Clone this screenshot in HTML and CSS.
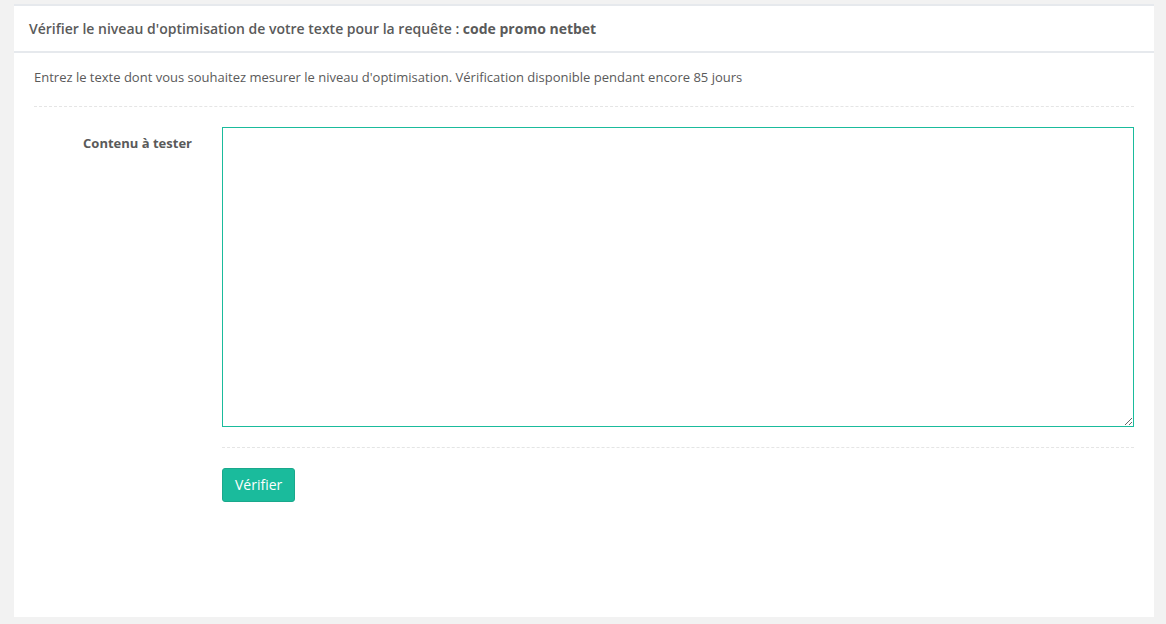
FILE: index.html
```html
<!DOCTYPE html>
<html lang="fr">
<head>
    <meta charset="UTF-8">
    <meta name="viewport" content="width=device-width, initial-scale=1.0">
    <title>Vérification</title>
    <link rel="stylesheet" href="styles.css">
</head>
<body>
    <div class="panel">
        <div class="panel-title">
            <h2>Vérifier le niveau d'optimisation de votre texte pour la requête : <b>code promo netbet</b></h2>
        </div>
        <div class="panel-content">
            <p class="intro">Entrez le texte dont vous souhaitez mesurer le niveau d'optimisation. Vérification disponible pendant encore 85 jours</p>
            <div class="separator"></div>
            <form class="check-form">
                <div class="form-row">
                    <label class="form-label" for="contenu">Contenu à tester</label>
                    <div class="form-field">
                        <textarea id="contenu" class="text-input" autofocus></textarea>
                    </div>
                </div>
                <div class="form-row">
                    <div class="form-label"></div>
                    <div class="form-field">
                        <div class="separator"></div>
                        <button type="button" class="btn-verify">Vérifier</button>
                    </div>
                </div>
            </form>
        </div>
    </div>
</body>
</html>
```

FILE: styles.css
```css
body {
    margin: 0;
    padding: 4px 12px 7px 14px;
    background-color: #f2f2f2;
    font-family: "Open Sans", Arial, sans-serif;
    font-size: 13px;
    color: #5a5a5a;
}
.panel {
    background: #fff;
    border-top: 2px solid #e6e9ed;
    height: 613px;
    box-sizing: border-box;
}
.panel-title {
    border-bottom: 2px solid #e6e9ed;
    padding: 13px 15px 0;
    height: 47px;
    box-sizing: border-box;
}
.panel-title h2 {
    margin: 0;
    font-size: 14px;
    font-weight: 600;
    line-height: 20px;
    color: #5a5a5a;
}
.panel-title b {
    font-weight: 700;
}
.panel-content {
    padding: 0 20px;
}
.intro {
    margin: 15px 0 20px;
    line-height: 18px;
}
.separator {
    border-top: 1px dashed #e5e5e5;
}
.check-form {
    margin-top: 20px;
}
.form-row {
    display: flex;
}
.form-label {
    width: 158px;
    flex: none;
    text-align: right;
    font-weight: 700;
    padding-top: 7px;
    line-height: 18px;
}
.form-field {
    flex: 1;
    margin-left: 30px;
}
.text-input {
    display: block;
    width: 100%;
    height: 300px;
    box-sizing: border-box;
    border: 1px solid #1abb9c;
    border-radius: 0;
    outline: none;
    padding: 6px 12px;
    font-family: "Open Sans", Arial, sans-serif;
    font-size: 13px;
    color: #555;
    resize: vertical;
    margin-bottom: 20px;
}
.btn-verify {
    margin-top: 20px;
    background: #1abb9c;
    border: 1px solid #1aa88c;
    border-radius: 3px;
    color: #fff;
    font-family: "Open Sans", Arial, sans-serif;
    font-size: 14px;
    padding: 0 12px 1px;
    height: 34px;
    width: 73px;
    cursor: pointer;
}
```
